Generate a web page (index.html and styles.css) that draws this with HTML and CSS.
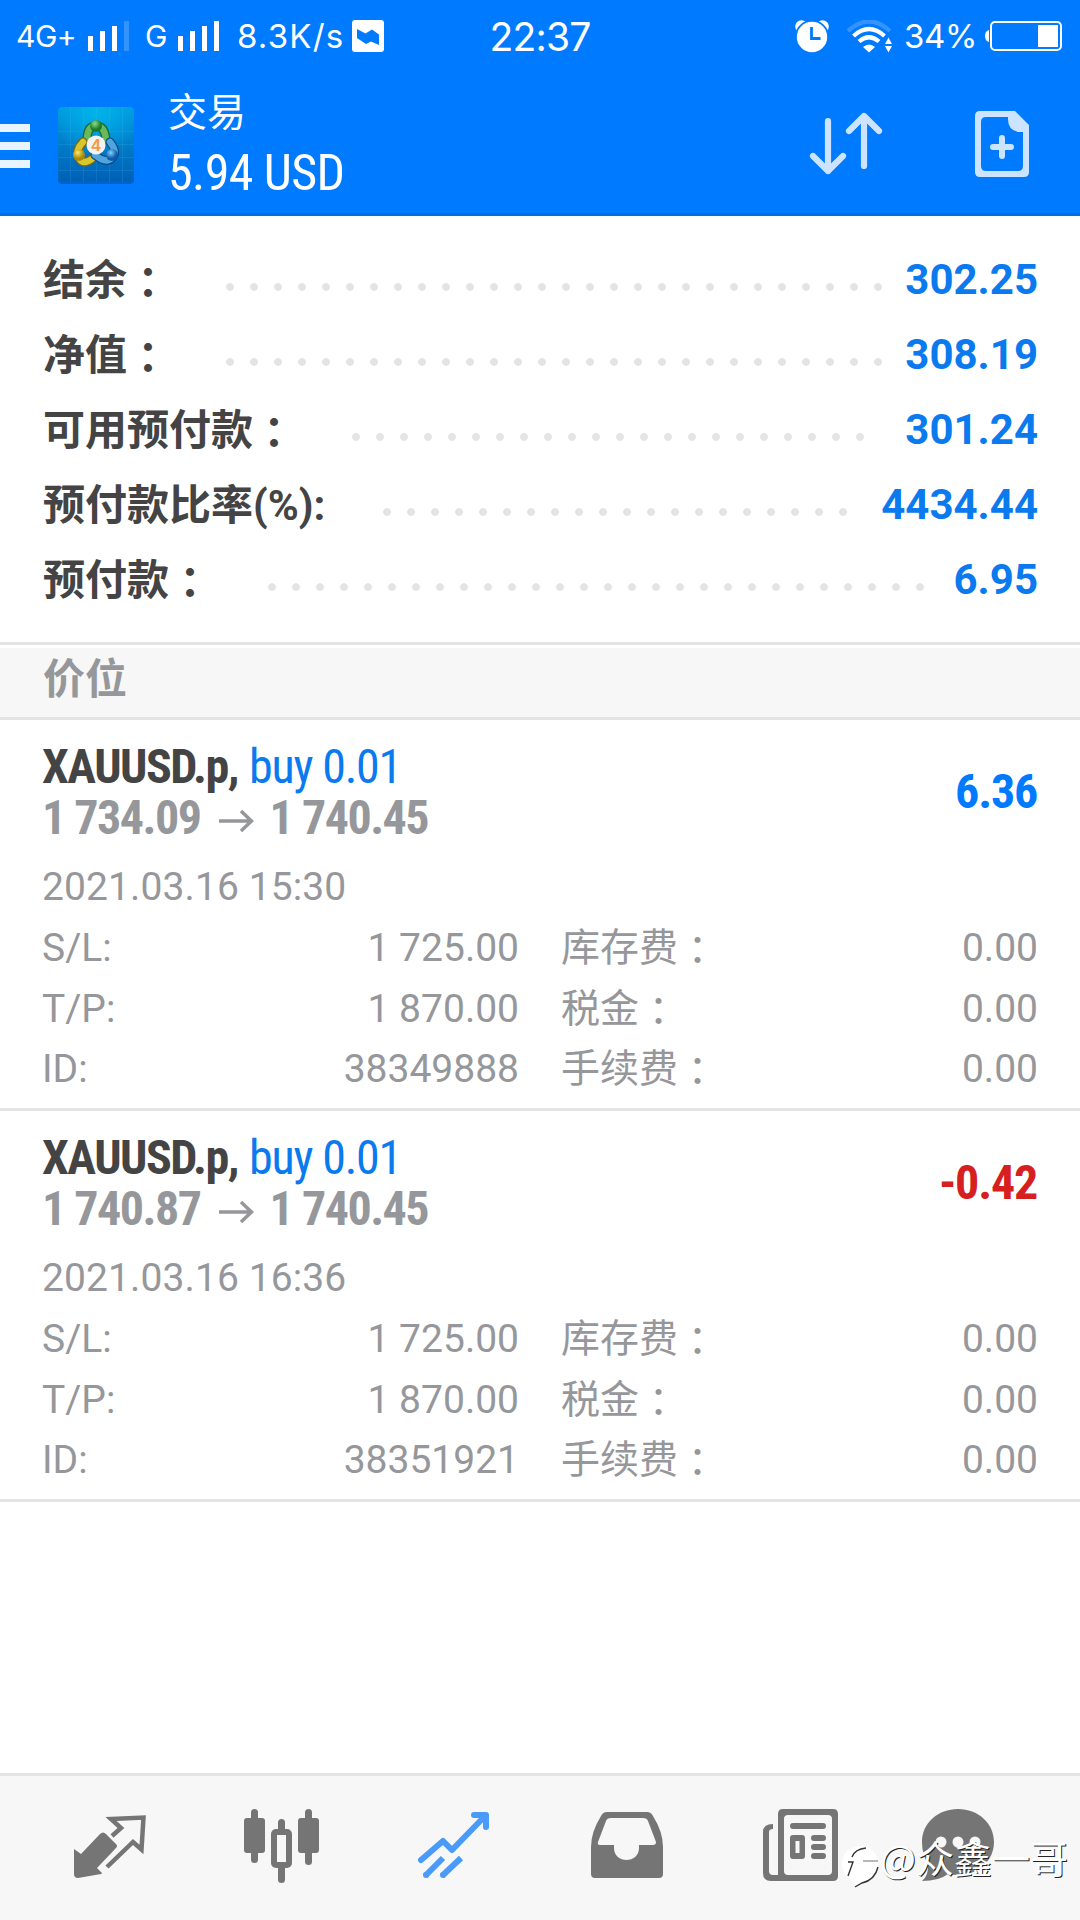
FILE: index.html
```html
<!DOCTYPE html>
<html lang="zh-CN">
<head>
<meta charset="utf-8">
<title>交易</title>
<link rel="stylesheet" href="styles.css">
</head>
<body>
<div class="screen">
  <header class="top">
    <div class="status">
      <div class="status-left">
        <span class="net">4G+</span>
        <svg class="signal" width="42" height="30" viewBox="0 0 42 30"><path fill="#fff" d="M0 15h5v15H0zM12 10h5v20h-5zM24 5h5v25h-5z"/><path fill="#fff" opacity=".2" d="M36 0h5v30h-5z"/></svg>
        <span class="net net-g">G</span>
        <svg class="signal" width="42" height="30" viewBox="0 0 42 30"><path fill="#fff" d="M0 15h5v15H0zM12 10h5v20h-5zM24 5h5v25h-5zM36 0h5v30h-5z"/></svg>
        <span class="speed">8.3K/s</span>
        <svg class="notice" width="32" height="32" viewBox="0 0 32 32"><rect width="32" height="32" rx="3" fill="#fff"/><path fill="#007aff" d="M5 9l8.500 4.500L20 9.500l7 5V25l-8-3.500-5 2.500-9-6z"/></svg>
      </div>
      <div class="clock">22:37</div>
      <div class="status-right">
        <svg class="alarm" width="34" height="33" viewBox="0 0 34 33"><circle cx="6.500" cy="6.500" r="6.300" fill="#fff"/><circle cx="27.500" cy="6.500" r="6.300" fill="#fff"/><circle cx="17" cy="17" r="17" fill="#007aff"/><circle cx="17" cy="17" r="15.200" fill="#fff"/><path d="M16.500 7v11.500h9" fill="none" stroke="#007aff" stroke-width="2.800"/></svg>
        <svg class="wifi" width="46" height="33" viewBox="0 0 46 33"><g fill="none" stroke="#fff" stroke-width="4.200"><path opacity=".2" d="M1 11Q22-8 43 11"/><path d="M6.500 16Q22 2 37.500 16"/><path d="M12 21.500Q22 13 32 21.500"/></g><path fill="#fff" d="M16 27q6-5 12 0l-6 5.500zM38 24l3.500-6.500L45 24zM38 26h7l-3.500 6.500z"/></svg>
        <span class="percent">34%</span>
        <svg class="battery" width="77" height="30" viewBox="0 0 77 30"><path fill="#fff" d="M4 9v12Q0 20 0 15t4-6z"/><rect x="6" y="1" width="70" height="28" rx="4" fill="none" stroke="#fff" stroke-width="2"/><path fill="#fff" d="M53 4h20v22H53z"/></svg>
      </div>
    </div>
    <div class="bar">
      <svg class="menu" width="30" height="44" viewBox="0 0 30 44"><path fill="#e8f4ff" d="M0 0h30v8H0zM0 18h30v8H0zM0 36h30v8H0z"/></svg>
      <svg class="logo" width="78" height="78" viewBox="0 0 78 78">
        <defs>
          <linearGradient id="bg" x2="0" y2="1"><stop stop-color="#0099de"/><stop offset="1" stop-color="#0060b5"/></linearGradient>
          <radialGradient id="shine" cx=".5" cy=".05" r=".6"><stop stop-color="#00b4ea"/><stop offset="1" stop-color="#00b4ea" stop-opacity="0"/></radialGradient>
          <radialGradient id="gr" cx=".4" cy=".3"><stop stop-color="#8fdc85"/><stop offset="1" stop-color="#1c7a2c"/></radialGradient>
          <radialGradient id="ye" cx=".4" cy=".3"><stop stop-color="#ffe869"/><stop offset="1" stop-color="#a88a08"/></radialGradient>
          <radialGradient id="bl" cx=".4" cy=".3"><stop stop-color="#7fd0ff"/><stop offset="1" stop-color="#0d5ba8"/></radialGradient>
        </defs>
        <rect x="1" y="2" width="76" height="76" rx="4" fill="#004c9c" opacity=".5"/>
        <rect x="1" y="1" width="76" height="75" rx="4" fill="url(#bg)"/><rect x="1" y="1" width="76" height="75" rx="4" fill="url(#shine)"/>
        <path stroke="#5cc8f5" stroke-opacity=".14" d="M26.500 1v75M39.500 1v75M52.500 1v75M65.500 1v75M13.500 1v75M1 25.500h76M1 38.500h76M1 51.500h76M1 64.500h76"/>
        <g fill="none" stroke-linecap="round">
          <path stroke="#1c6526" stroke-width="9" d="M30 34Q30 20 39 20T49 34"/><path stroke="#67b95b" stroke-width="6.500" d="M30 34Q30 20 39 20T49 34"/>
          <path stroke="#786711" stroke-width="9" d="M26 36Q18 44 22 52T36 52"/><path stroke="#d9c62d" stroke-width="6.500" d="M26 36Q18 44 22 52T36 52"/>
          <path stroke="#0b4a84" stroke-width="9" d="M53 36Q61 46 55 52T38 49"/><path stroke="#4fa6df" stroke-width="6.500" d="M53 36Q61 46 55 52T38 49"/>
        </g>
        <circle cx="39" cy="20" r="6" fill="url(#gr)"/><circle cx="22" cy="49" r="6" fill="url(#ye)"/><circle cx="55" cy="49" r="6" fill="url(#bl)"/>
        <circle cx="39" cy="39" r="9.500" fill="#f6f3ee"/>
        <text class="logo-num" x="39" y="45" text-anchor="middle">4</text>
      </svg>
      <div class="titles">
        <div class="title">交易</div>
        <div class="total">5.94 USD</div>
      </div>
      <svg class="sort" width="74" height="64" viewBox="0 0 74 64"><g fill="none" stroke="#cce4ff" stroke-width="6.200" stroke-linecap="round" stroke-linejoin="round"><path d="M19 9v50M4 44l15 15 15-15"/><path d="M55 54V4M40 19L55 4l15 15"/></g></svg>
      <svg class="new-order" width="54" height="66" viewBox="0 0 54 66"><path fill="#cce4ff" fill-rule="evenodd" d="M5 0h35l14 14v47q0 5-5 5H5q-5 0-5-5V5q0-5 5-5zM11 6q-5 0-5 5v44q0 5 5 5h32q5 0 5-5V21h-5Q33 19 33 8V6z"/><path d="M27 27v18M18 36h18" stroke="#cce4ff" stroke-width="6" stroke-linecap="round"/></svg>
    </div>
  </header>

  <section class="summary">
    <div class="row"><span class="label">结余<i lang="zh-TW">：</i></span><span class="dots d1"></span><span class="value">302.25</span></div>
    <div class="row"><span class="label">净值<i lang="zh-TW">：</i></span><span class="dots d1"></span><span class="value">308.19</span></div>
    <div class="row"><span class="label">可用预付款<i lang="zh-TW">：</i></span><span class="dots d2"></span><span class="value">301.24</span></div>
    <div class="row"><span class="label">预付款比率(%):</span><span class="dots d3"></span><span class="value">4434.44</span></div>
    <div class="row"><span class="label">预付款<i lang="zh-TW">：</i></span><span class="dots d4"></span><span class="value">6.95</span></div>
  </section>

  <h2 class="section-title">价位</h2>

  <article class="position">
    <div class="head">
      <div>
        <div class="line"><b class="symbol">XAUUSD.p,</b> <span class="side">buy 0.01</span></div>
        <div class="line price"><b>1 734.09</b><svg class="arrow" width="35" height="24" viewBox="0 0 35 24"><path d="M0 12h32M22 2l10.500 10L22 22" fill="none" stroke="#96979b" stroke-width="3.500"/></svg><b>1 740.45</b></div>
      </div>
      <b class="profit">6.36</b>
    </div>
    <div class="date">2021.03.16 15:30</div>
    <div class="grid">
      <span>S/L:</span><span class="num">1 725.00</span><span class="fee">库存费<i lang="zh-TW">：</i></span><span class="num">0.00</span>
      <span>T/P:</span><span class="num">1 870.00</span><span class="fee">税金<i lang="zh-TW">：</i></span><span class="num">0.00</span>
      <span>ID:</span><span class="num">38349888</span><span class="fee">手续费<i lang="zh-TW">：</i></span><span class="num">0.00</span>
    </div>
  </article>
  <article class="position">
    <div class="head">
      <div>
        <div class="line"><b class="symbol">XAUUSD.p,</b> <span class="side">buy 0.01</span></div>
        <div class="line price"><b>1 740.87</b><svg class="arrow" width="35" height="24" viewBox="0 0 35 24"><path d="M0 12h32M22 2l10.500 10L22 22" fill="none" stroke="#96979b" stroke-width="3.500"/></svg><b>1 740.45</b></div>
      </div>
      <b class="profit loss">-0.42</b>
    </div>
    <div class="date">2021.03.16 16:36</div>
    <div class="grid">
      <span>S/L:</span><span class="num">1 725.00</span><span class="fee">库存费<i lang="zh-TW">：</i></span><span class="num">0.00</span>
      <span>T/P:</span><span class="num">1 870.00</span><span class="fee">税金<i lang="zh-TW">：</i></span><span class="num">0.00</span>
      <span>ID:</span><span class="num">38351921</span><span class="fee">手续费<i lang="zh-TW">：</i></span><span class="num">0.00</span>
    </div>
  </article>

  <nav class="tabs">
    <svg class="tab-quotes" width="72" height="64" viewBox="0 0 72 64"><path fill="#757575" d="M0 34l7 5L26 19q3-3 6 0l10 10q2 2 0 4L23 53l5 5q0 1-1 1L4 63q-4 0-4-4z"/><path fill="none" stroke="#757575" stroke-width="4.500" d="M38 21l9-8-10-9L69.500 2.500l-2 32L59 27 33 52"/></svg>
    <svg class="tab-chart" width="75" height="75" viewBox="0 0 75 75"><g fill="#757575"><rect x="0" y="9" width="21" height="35" rx="3"/><rect x="7" y="0" width="7" height="54" rx="3.500"/><rect x="54" y="9" width="21" height="35" rx="3"/><rect x="61" y="0" width="7" height="56" rx="3.500"/><rect x="34" y="10" width="7" height="15" rx="3.500"/><rect x="34" y="53" width="7" height="21" rx="3.500"/></g><rect x="30" y="23" width="15" height="33" rx="2" fill="none" stroke="#757575" stroke-width="6"/></svg>
    <svg class="tab-trade" width="71" height="66" viewBox="0 0 71 66"><g fill="none" stroke="#4a9bf9" stroke-width="6" stroke-linejoin="round"><path stroke-linecap="round" d="M3 48l22-19 9 9L67 4M56 3h12v12"/><path d="M7 64l18-18M24 64l19-18"/></g><g fill="#4a9bf9"><circle cx="8" cy="63" r="3"/><circle cx="25" cy="63" r="3"/></g></svg>
    <svg class="tab-history" width="72" height="66" viewBox="0 0 72 66"><path fill="#757575" fill-rule="evenodd" d="M16 0h40q4 0 6 4 10 16 10 31v27q0 4-4 4H4q-4 0-4-4V35Q0 20 10 4q2-4 6-4zM20 6q-4 0-5 3L7 30q-1 3 2 3h14v3c0 16 25 16 25 0v-3h14q3 0 3-3L57 9q-1-3-5-3z"/></svg>
    <svg class="tab-news" width="75" height="72" viewBox="0 0 75 72"><path fill="#757575" fill-rule="evenodd" d="M20 0h50q5 0 5 5v62q0 5-5 5H8q-8 0-8-8V23q0-8 10-8v5q-4 0-4 3v39q0 4 4 4h5V5q0-5 5-5zM25 6q-4 0-4 4v52q0 4 4 4h40q4 0 4-4V10q0-4-4-4zM30 26h9q3 0 3 3v18q0 3-3 3h-9q-3 0-3-3V29q0-3 3-3zM32.500 32v12h4V32z"/><path d="M30 17h30M51 29h9M51 38h9M51 47h9" stroke="#757575" stroke-width="6" stroke-linecap="round"/></svg>
    <svg class="tab-chat" width="72" height="72" viewBox="0 0 72 72"><path fill="#757575" d="M36 0c20 0 36 14 36 33S56 66 36 66q-5 0-10-1-9 7-26 7 7-6 6-17Q0 46 0 33C0 14 16 0 36 0z"/><g fill="#f7f7f7"><circle cx="19" cy="33" r="5.500"/><circle cx="36" cy="33" r="5.500"/><circle cx="53" cy="33" r="5.500"/></g></svg>
  </nav>
  <div class="watermark">
    <svg width="37" height="42" viewBox="0 0 37 42"><path d="M18 0C29 0 36 7 36 18S28 37 14 40L8 33Q0 28 0 18C0 7 8 0 18 0z" fill="#fff"/><g fill="none" stroke="#333" stroke-width="1.400"><path d="M6 30l5-14H6M10 11q3-8 14-9"/><path d="M21 15h15" stroke="#999"/><path d="M36 21q-3 13-16 16l-7 4"/></g></svg>
    <span>@众鑫一哥</span>
  </div>
</div>
</body>
</html>
```
FILE: styles.css
```css
* { box-sizing: border-box; }
body { margin: 0; background: #fff; }
.screen {
  position: relative;
  display: flex;
  flex-direction: column;
  width: 1080px;
  height: 1920px;
  overflow: hidden;
  background: #fff;
  color: #96979b;
  font-family: Roboto, "Noto Sans CJK SC", sans-serif;
}
svg { display: block; flex: none; }
i { font-style: normal; font-family: "Noto Sans CJK TC", sans-serif; line-height: 0; vertical-align: -3px; }

.top { height: 216px; background: #007aff; border-bottom: 3px solid #026ee0; color: #fff; }
.status { display: grid; grid-template-columns: 480px 120px 480px; align-items: center; height: 72px; font-family: Inter, sans-serif; }
.status-left { display: flex; align-items: center; padding-left: 16px; }
.net { width: 72px; font-size: 30px; letter-spacing: -0.5px; }
.net-g { width: 33px; margin-left: 15px; }
.speed { width: 115px; margin-left: 17px; font-size: 33px; line-height: 40px; letter-spacing: 1.2px; white-space: nowrap; }
.clock { font-size: 39px; text-align: center; letter-spacing: -0.8px; white-space: nowrap; }
.status-right { display: flex; align-items: center; padding-left: 195px; }
.wifi { margin-left: 18px; }
.percent { width: 81px; margin-left: 11px; font-size: 33px; line-height: 40px; letter-spacing: -0.3px; white-space: nowrap; }
.bar { display: flex; align-items: flex-start; height: 141px; }
.menu { margin-top: 52px; }
.logo { margin: 34px 0 0 27px; }
.logo-num { font: bold 17px "Liberation Sans", sans-serif; fill: #f09a4a; }
.titles { width: 641px; margin: 16px 0 0 33px; }
.title { font-size: 39px; line-height: 50px; }
.total { font-size: 50px; line-height: 70px; font-stretch: 75%; letter-spacing: -0.6px; }
.sort { margin-top: 40px; }
.new-order { margin: 39px 0 0 92px; }

.summary { height: 426px; padding: 25px 42px 0 43px; }
.row { display: flex; align-items: center; height: 75px; font-size: 42px; font-weight: 700; }
.label { margin-bottom: 5px; color: #444; white-space: nowrap; }
.dots { height: 8px; margin-top: 16px; background: radial-gradient(circle at 4px 4px, #e4e4e4 3.5px, transparent 4.2px) 0 0 / 24px 8px repeat-x; }
.value { margin: 2px 0 0 auto; color: #0a7aee; }
.d1 { width: 656px; margin-left: 57px; }
.d2 { width: 512px; margin-left: 57px; }
.d3 { width: 464px; margin-left: 58px; }
.d4 { width: 656px; margin-left: 57px; }

.section-title { height: 78px; margin: 0; padding: 0 43px; border-top: 3px solid #e4e4e4; border-bottom: 3px solid #e4e4e4; box-shadow: inset 0 3px #fff; background: #f7f7f7; font-size: 42px; line-height: 69px; font-weight: 700; }

.position { height: 391px; padding: 21px 42px 0; border-bottom: 3px solid #e4e4e4; }
.head { display: flex; justify-content: space-between; font-size: 48px; font-stretch: 75%; }
.line { height: 51px; line-height: 51px; white-space: nowrap; }
.line b { letter-spacing: -1.5px; }
.side { color: #0a7aee; letter-spacing: -1.2px; }
.line .symbol { color: #444; }
.price { display: flex; align-items: center; }
.arrow { margin: 6px 16px 0 18px; }
.profit { margin-right: 1px; color: #007aff; line-height: 102px; letter-spacing: -1.2px; }
.loss { color: #d6201f; }
.date { height: 61px; margin-top: 14px; font-size: 39px; line-height: 61px; letter-spacing: 0.1px; }
.grid { display: grid; grid-template-columns: 136px 341px 196px 323px; grid-auto-rows: 60.6px; font-size: 39px; line-height: 61px; }
.num { text-align: right; }
.fee { padding-left: 42px; white-space: nowrap; }

.tabs { display: flex; align-items: flex-start; height: 147px; margin-top: auto; padding: 33px 0 0 74px; border-top: 3px solid #e4e4e4; background: #f7f7f7; }
.tab-quotes { margin-top: 6px; }
.tab-chart { margin-left: 98px; }
.tab-trade { margin: 3px 0 0 99px; }
.tab-history { margin: 3px 0 0 102px; }
.tab-news { margin-left: 100px; }
.tab-chat { margin-left: 84px; }
.watermark { position: absolute; left: 842px; top: 1829px; display: flex; align-items: flex-end; gap: 1px; color: #fff; font: 38px/56px "Noto Sans CJK SC", sans-serif; white-space: nowrap; }
.watermark span { margin-bottom: 3px; text-shadow: 1px 1px 0 #222; }
```
